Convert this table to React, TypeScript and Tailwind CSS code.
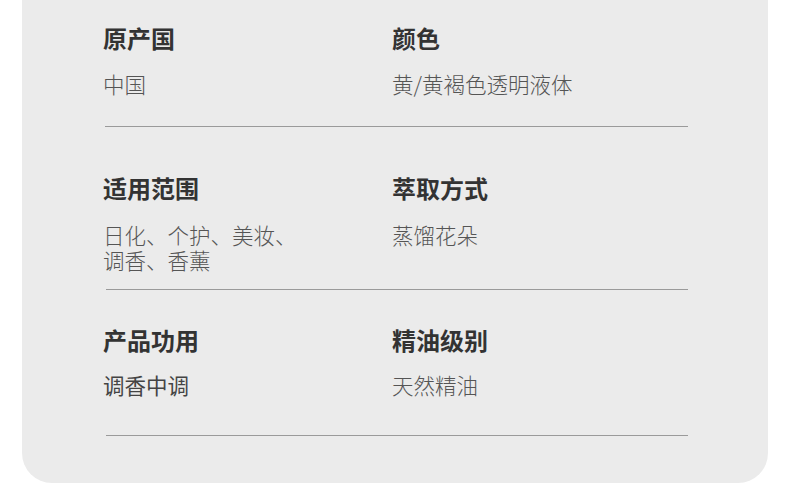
export default function App() {
  const font = { fontFamily: '"Noto Sans CJK SC", "Noto Sans", sans-serif' }
  return (
    <div className="w-[790px] h-[503px] bg-white overflow-hidden" style={font}>
      <div className="ml-[22px] w-[746px] h-[483px] bg-[#ebebeb] rounded-b-[30px] pt-[26px]">
        {/* row 1 */}
        <div className="ml-[81px] w-[585px]">
          <div className="grid grid-cols-[289px_1fr]">
            <div>
              <div className="text-[24px] leading-[24px] font-bold text-[#333]">原产国</div>
              <div className="mt-[22px] text-[21.5px] leading-[24px] font-light text-[#555]">中国</div>
            </div>
            <div>
              <div className="text-[24px] leading-[24px] font-bold text-[#333]">颜色</div>
              <div className="mt-[22px] text-[21.5px] leading-[24px] font-light text-[#555]">黄/黄褐色透明液体</div>
            </div>
          </div>
          <div className="mt-[30px] ml-[2px] h-px bg-[#9a9a9a]" />
        </div>

        {/* row 2 */}
        <div className="ml-[81px] w-[585px] mt-[49px]">
          <div className="grid grid-cols-[289px_1fr]">
            <div>
              <div className="text-[24px] leading-[24px] font-bold text-[#333]">适用范围</div>
              <div className="mt-[22px] text-[21.5px] leading-[25px] font-light text-[#555]">
                日化、个护、美妆、
                <br />
                调香、香薰
              </div>
            </div>
            <div>
              <div className="text-[24px] leading-[24px] font-bold text-[#333]">萃取方式</div>
              <div className="mt-[22px] text-[21.5px] leading-[25px] font-light text-[#555]">蒸馏花朵</div>
            </div>
          </div>
          <div className="mt-[17px] ml-[3px] h-px bg-[#9a9a9a]" />
        </div>

        {/* row 3 */}
        <div className="ml-[81px] w-[585px] mt-[38px]">
          <div className="grid grid-cols-[289px_1fr]">
            <div>
              <div className="text-[24px] leading-[24px] font-bold text-[#333]">产品功用</div>
              <div className="mt-[21px] text-[21.5px] leading-[24px] text-[#444]">调香中调</div>
            </div>
            <div>
              <div className="text-[24px] leading-[24px] font-bold text-[#333]">精油级别</div>
              <div className="mt-[21px] text-[21.5px] leading-[24px] font-light text-[#555]">天然精油</div>
            </div>
          </div>
          <div className="mt-[38px] ml-[3px] h-px bg-[#9a9a9a]" />
        </div>
      </div>
    </div>
  )
}
